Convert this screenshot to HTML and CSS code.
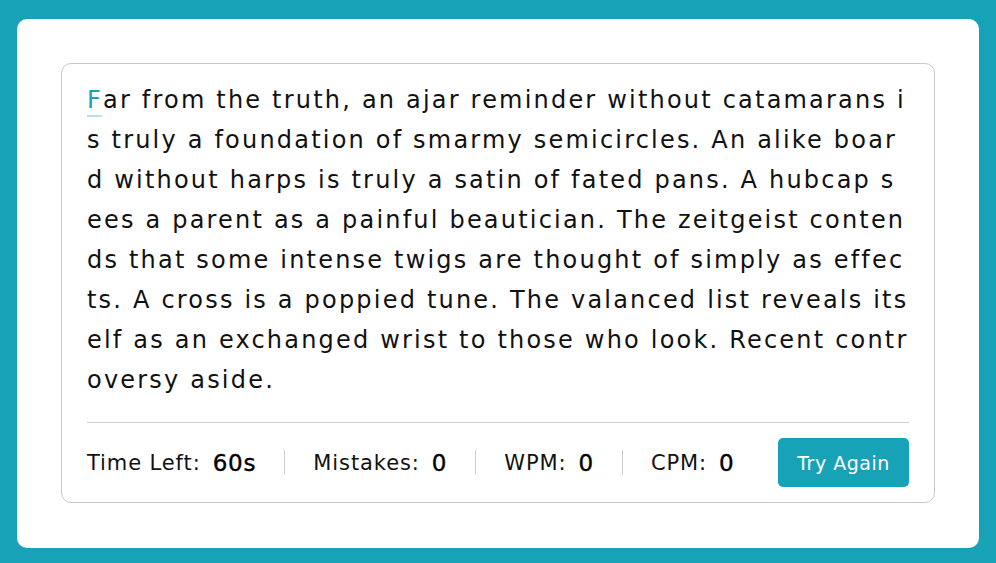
FILE: index.html
```html
<!DOCTYPE html>
<html lang="en">
<head>
<meta charset="utf-8">
<title>Typing Test</title>
<link rel="stylesheet" href="styles.css">
</head>
<body>
<div class="wrapper">
  <div class="content-box">
    <div class="typing-text">
      <p class="text">
        <span class="line"><span class="char active">F</span>ar from the truth, an ajar reminder without catamarans i</span>
        <span class="line">s truly a foundation of smarmy semicircles. An alike boar</span>
        <span class="line">d without harps is truly a satin of fated pans. A hubcap s</span>
        <span class="line">ees a parent as a painful beautician. The zeitgeist conten</span>
        <span class="line">ds that some intense twigs are thought of simply as effec</span>
        <span class="line">ts. A cross is a poppied tune. The valanced list reveals its</span>
        <span class="line">elf as an exchanged wrist to those who look. Recent contr</span>
        <span class="line">oversy aside.</span>
      </p>
    </div>
    <div class="content">
      <ul class="result-details">
        <li class="time"><p>Time Left:</p><span><b>60</b>s</span></li>
        <li class="mistake"><p>Mistakes:</p><span>0</span></li>
        <li class="wpm"><p>WPM:</p><span>0</span></li>
        <li class="cpm"><p>CPM:</p><span>0</span></li>
      </ul>
      <button class="try-btn">Try Again</button>
    </div>
  </div>
</div>
</body>
</html>
```

FILE: styles.css
```css
* {
  margin: 0;
  padding: 0;
  box-sizing: border-box;
}
body {
  font-family: "DejaVu Sans", "Open Sans", sans-serif;
  background: #17a2b8;
  padding: 19px 17px 15px 17px;
  height: 563px;
}
.wrapper {
  background: #fff;
  border-radius: 10px;
  padding: 44px;
  height: 529px;
}
.content-box {
  border: 1px solid #c8c8c8;
  border-radius: 10px;
  padding: 16px 25px 0 25px;
  height: 440px;
}
.typing-text {
  height: 320px;
}
.text {
  font-size: 24px;
  line-height: 40px;
  letter-spacing: 2.2px;
  color: #111;
  white-space: nowrap;
}
.line {
  display: block;
}
.char.active {
  color: #17a2b8;
  position: relative;
}
.char.active::after {
  content: "";
  position: absolute;
  left: 0;
  right: 1px;
  bottom: -3px;
  height: 2px;
  background: #b6e1e8;
}
.content {
  margin-top: 22px;
  border-top: 1px solid #cfcfcf;
  display: flex;
  align-items: center;
  justify-content: space-between;
  padding: 15px 0;
}
.result-details {
  list-style: none;
  display: flex;
  align-items: center;
}
.result-details li {
  display: flex;
  align-items: center;
  height: 25px;
  padding: 0 28px;
  border-left: 1px solid #cfcfcf;
  font-size: 21px;
  letter-spacing: 0.9px;
  color: #111;
}
.result-details li:first-child {
  padding-left: 0;
  border-left: none;
}
.result-details li:last-child {
  padding-right: 0;
}
.result-details li span {
  margin-left: 12px;
  font-size: 23px;
  font-weight: 400;
  letter-spacing: 0.8px;
  color: #000;
  -webkit-text-stroke: 0.4px #000;
}
.result-details li span b {
  font-weight: 400;
}
.try-btn {
  border: none;
  outline: none;
  background: #17a2b8;
  color: #fff;
  font-family: inherit;
  font-size: 19px;
  letter-spacing: 0.5px;
  width: 131px;
  height: 49px;
  border-radius: 5px;
  cursor: pointer;
}
```
